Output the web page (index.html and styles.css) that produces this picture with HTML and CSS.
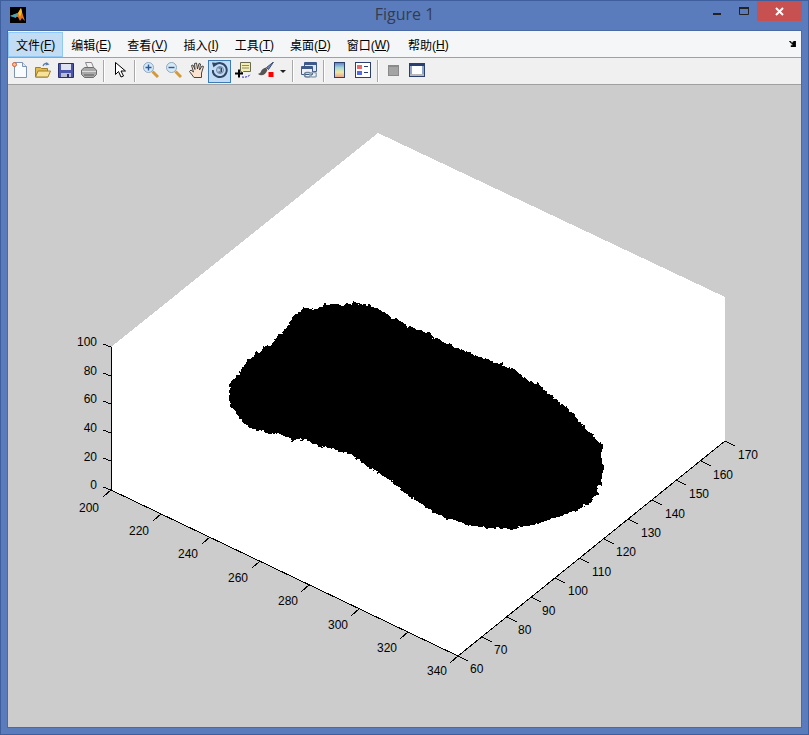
FILE: index.html
```html
<!DOCTYPE html>
<html lang="zh">
<head>
    <meta charset="UTF-8">
    <meta name="viewport" content="width=device-width, initial-scale=1.0">
    <title>Figure 1</title>
    <link rel="stylesheet" href="styles.css">
</head>
<body>
    <div class="window">
        <div class="titlebar">
            <svg class="app-icon" viewBox="0 0 16 16">
                <rect width="16" height="16" fill="#000"/>
                <path d="M0 9l5-2 3-1 3-5 1 4 3 9-3-3-2 3-2-4z" fill="#e8701a"/>
                <path d="M0 9l5-2 3-1-2 5z" fill="#3fa7c4"/>
                <path d="M8 6l3-5 1 4-2 5z" fill="#f6c02c"/>
            </svg>
            <div class="title">Figure 1</div>
            <div class="caption">
                <svg class="cap-btn" viewBox="0 0 27 20"><rect x="11" y="12" width="8" height="2" fill="#222"/></svg>
                <svg class="cap-btn" viewBox="0 0 27 20"><path d="M10.500 6.500h9v7h-9z" fill="none" stroke="#222"/><rect x="10" y="6" width="10" height="2" fill="#222"/></svg>
                <div class="close">
                    <svg viewBox="0 0 9 9" width="9" height="9"><path d="M1 1l7 7M8 1l-7 7" stroke="#fff" stroke-width="2"/></svg>
                </div>
            </div>
        </div>

        <div class="client">
            <div class="menubar">
                <span class="menu active">文件(<u>F</u>)</span>
                <span class="menu">编辑(<u>E</u>)</span>
                <span class="menu">查看(<u>V</u>)</span>
                <span class="menu">插入(<u>I</u>)</span>
                <span class="menu">工具(<u>T</u>)</span>
                <span class="menu">桌面(<u>D</u>)</span>
                <span class="menu">窗口(<u>W</u>)</span>
                <span class="menu last">帮助(<u>H</u>)</span>
                <svg class="menu-more" viewBox="0 0 8 7"><path d="M0 0h2v1h1v1h1v-1h1v-1h3v7h-6v-2h2v-1h-1v-1h-1v-1h-1v-1h-1z" fill="#000"/></svg>
            </div>

            <div class="toolbar">
                <!-- new -->
                <div class="tool"><svg viewBox="0 0 16 16"><path d="M2.500 .5h8l4 4v11h-12z" fill="#f8fbff" stroke="#7f93b2"/><path d="M10.500 .5v4h4" fill="#dfe8f2" stroke="#7f93b2"/><circle cx="2.500" cy="2.500" r="2" fill="#f6c0a0" stroke="#e05a20"/></svg></div>
                <!-- open -->
                <div class="tool"><svg viewBox="0 0 16 16"><path d="M.5 5.500h5l1 1h6v8.500h-12z" fill="#e2bb4e" stroke="#9c7f28"/><path d="M.5 15l2.500-6h12.500l-2.500 6z" fill="#f8e29a" stroke="#9c7f28"/><path d="M8 4c1-2.500 3-3 4.500-2" fill="none" stroke="#5a7fae" stroke-width="1.300"/><path d="M11.500 0l3 2.500-4 1z" fill="#5a7fae"/></svg></div>
                <!-- save -->
                <div class="tool"><svg viewBox="0 0 16 16"><path d="M.5 1.500h15v14h-15z" fill="#4a54a8" stroke="#2a2f70"/><rect x="3" y="2" width="10" height="6" fill="#dfe2f0"/><rect x="3" y="11" width="10" height="4" fill="#b9bdd0"/><rect x="9" y="12" width="2" height="3" fill="#2a2f70"/></svg></div>
                <!-- print -->
                <div class="tool"><svg viewBox="0 0 16 16"><path d="M4.500 .5h6l2.500 6h-6z" fill="#f2f2f2" stroke="#888"/><path d="M.5 8l3-2.500h9l3 2.500v4.500l-3 3h-9l-3-3z" fill="#a9a9a9" stroke="#6c6c6c"/><path d="M1 9.500h14" stroke="#dcdcdc"/><path d="M3 13h10" stroke="#5c5c5c"/></svg></div>
                <div class="sep"></div>
                <!-- pointer -->
                <div class="tool"><svg viewBox="0 0 16 16"><path d="M3.500 .5v12l3-3 2.500 5.500 2.500-1-2.500-5h4.500z" fill="#fff" stroke="#000"/></svg></div>
                <div class="sep"></div>
                <!-- zoom in -->
                <div class="tool"><svg viewBox="0 0 16 16"><path d="M9.500 9.500l5.500 5.500" stroke="#d49a3a" stroke-width="3"/><circle cx="5.500" cy="5.500" r="5" fill="#d5e8f6" stroke="#8ea8c0"/><path d="M2.500 5.500h6M5.500 2.500v6" stroke="#2a5a9a" stroke-width="1.400"/></svg></div>
                <!-- zoom out -->
                <div class="tool"><svg viewBox="0 0 16 16"><path d="M9.500 9.500l5.500 5.500" stroke="#d49a3a" stroke-width="3"/><circle cx="5.500" cy="5.500" r="5" fill="#d5e8f6" stroke="#8ea8c0"/><path d="M2.500 5.500h6" stroke="#2a5a9a" stroke-width="1.400"/></svg></div>
                <!-- pan -->
                <div class="tool"><svg viewBox="0 0 16 16"><path d="M5 15.500L.5 9.500L2 8l2.500 2L2.500 3.500L4 3l2 4.500L5.500 1.500L7.500 1l1 6L10 1.500l1.500 .5l-1 6L13 4l1.500 .5l-2 6.500v4.500z" fill="#fae3d0" stroke="#333" stroke-width=".9"/></svg></div>
                <!-- rotate 3d, pressed -->
                <div class="tool on"><svg viewBox="0 0 16 16"><path d="M2.900 3a7 7 0 1 1-2.200 5" fill="none" stroke="#2f4668" stroke-width="2"/><path d="M0 .5l6 .5-4.500 4.500z" fill="#2f4668"/><circle cx="8" cy="8" r="3.500" fill="#b9cfe6" stroke="#6d87a8"/><path d="M6.500 6h3v4h-3M8 8h1.500" fill="none" stroke="#2f4668"/></svg></div>
                <!-- data cursor -->
                <div class="tool"><svg viewBox="0 0 16 16"><path d="M5.500 .5h10v9h-7l-2 2v-2h-1z" fill="#f4eeb0" stroke="#6a6a50"/><path d="M7 3.500h7M7 6h7" stroke="#8a8a6a"/><path d="M0 11.500h8M4 7.500v8" stroke="#000" stroke-width="2"/><path d="M7 15c3 .5 6 0 8.500-2.500" fill="none" stroke="#2222cc" stroke-dasharray="2 1"/></svg></div>
                <!-- brush -->
                <div class="tool"><svg viewBox="0 0 16 16"><path d="M15.500 0l-7 5.500 2 2z" fill="#6e86b8" stroke="#3d4e78"/><path d="M8 5.500c-3 .5-4.500 2.500-5 4-.5 1.500-2 2-3 2.500 3 2.500 7.500 1.500 9.500-4z" fill="#555"/><rect x="10.500" y="10" width="5" height="5" fill="#f00"/></svg></div>
                <div class="tool-arrow"></div>
                <div class="sep"></div>
                <!-- link plot -->
                <div class="tool"><svg viewBox="0 0 16 16"><path d="M3.500 .5h12v9h-12z" fill="#dde6f2" stroke="#3d5a8a"/><path d="M3 1h13v2H3z" fill="#3d5a8a"/><path d="M.5 4.500h11v8h-11z" fill="#eef2f8" stroke="#3d5a8a"/><path d="M0 5h12v2H0z" fill="#3d5a8a"/><rect x="3.500" y="10.500" width="6.500" height="4.500" rx="2.200" fill="none" stroke="#6d8096" stroke-width="1.600"/><rect x="9" y="10.500" width="6.500" height="4.500" rx="2.200" fill="none" stroke="#93a6ba" stroke-width="1.600"/></svg></div>
                <div class="sep"></div>
                <!-- colorbar -->
                <div class="tool"><svg viewBox="0 0 16 16"><defs><linearGradient id="cbar" x1="0" y1="0" x2="0" y2="1"><stop offset="0" stop-color="#5a7ac8"/><stop offset=".35" stop-color="#a8d8d8"/><stop offset=".65" stop-color="#f0e8a0"/><stop offset="1" stop-color="#e8a090"/></linearGradient></defs><rect x="2.500" y=".5" width="10" height="15" fill="url(#cbar)" stroke="#2a3f70"/></svg></div>
                <!-- legend -->
                <div class="tool"><svg viewBox="0 0 16 16"><rect x=".5" y=".5" width="15" height="15" fill="#fff" stroke="#2a3f70"/><rect x="2" y="3" width="5" height="4" fill="#e86a6a"/><rect x="2" y="9" width="5" height="4" fill="#5a6ae0"/><path d="M9 4.500h4M9 10.500h4" stroke="#2a3f70"/></svg></div>
                <div class="sep"></div>
                <!-- hide plot tools -->
                <div class="tool"><svg viewBox="0 0 16 16"><rect x="2" y="3" width="11" height="11" fill="#8a8a8a"/><rect x="3" y="5" width="9" height="8" fill="#a4a4a4"/></svg></div>
                <!-- show plot tools -->
                <div class="tool"><svg viewBox="0 0 16 16"><rect x=".5" y="1.500" width="15" height="13" fill="#8fa6c8" stroke="#2a3f70"/><rect x="1" y="2" width="14" height="2" fill="#2a3f70"/><rect x="3" y="4" width="10" height="8" fill="#fff"/><rect x="1" y="12" width="14" height="2" fill="#b8b8b8"/></svg></div>
            </div>

            <svg class="plot" viewBox="8 85 793 642">
                <defs>
                    <filter id="rough" x="-5%" y="-5%" width="110%" height="110%" color-interpolation-filters="sRGB">
                        <feTurbulence type="fractalNoise" baseFrequency="0.22" numOctaves="2" seed="4"/>
                        <feDisplacementMap in="SourceGraphic" scale="6" xChannelSelector="R" yChannelSelector="G"/>
                    </filter>
                </defs>
                <polygon class="wall" points="378,133 725,297 725,441 458,656 111,490 111,347"/>

                <path class="blob" filter="url(#rough)" d="M302 307L307 308L317 309L325 305L333 304L343 305L355 303L368 305L377 308L383 311L390 317L400 320L408 327L420 329L440 340L453 346L470 353L487 359L503 365L520 373L523 378L538 384L548 393L557 400L570 410L583 426L595 438L602 444L602 457L603 470L603 478L599 485L598 493L590 502L575 512L563 515L543 522L530 525L510 529L497 528L480 527L463 523L447 519L433 512L420 503L410 497L402 490L385 477L363 464L357 458L348 453L342 453L337 450L320 446L307 440L293 440L280 434L270 434L260 430L252 429L247 426L240 418L232 408L228 400L229 392L231 380L235 378L242 370L248 360L258 352L263 348L273 343L277 337L285 330L291 320L296 316Z"/>

                <path class="axis" d="M111 347V490L458 656L725 441"/>
                <!-- z ticks -->
                <path class="axis" d="M111 347l-8-3M111 376l-8-3M111 404l-8-3M111 433l-8-3M111 461l-8-3M111 490l-8-3"/>
                <!-- x ticks -->
                <path class="axis" d="M111 490l-8 7M161 514l-8 7M210 537l-8 7M260 561l-8 7M309 585l-8 7M359 609l-8 7M408 632l-8 7M458 656l-8 7"/>
                <!-- y ticks -->
                <path class="axis" d="M458 656l10 5M482 637l10 5M507 617l10 5M531 597l10 5M555 578l10 5M579 558l10 5M604 539l10 5M628 519l10 5M652 500l10 5M676 480l10 5M701 461l10 5M725 441l10 5"/>

                <g class="tick-z">
                    <text x="97" y="346">100</text>
                    <text x="97" y="374.500">80</text>
                    <text x="97" y="403">60</text>
                    <text x="97" y="432">40</text>
                    <text x="97" y="460.500">20</text>
                    <text x="97" y="489">0</text>
                </g>
                <g class="tick-x">
                    <text x="89" y="512">200</text>
                    <text x="139" y="535">220</text>
                    <text x="188" y="558">240</text>
                    <text x="238" y="582">260</text>
                    <text x="288" y="605">280</text>
                    <text x="338" y="629">300</text>
                    <text x="387" y="652">320</text>
                    <text x="437" y="675">340</text>
                </g>
                <g class="tick-y">
                    <text x="470" y="673">60</text>
                    <text x="494" y="654">70</text>
                    <text x="518" y="634">80</text>
                    <text x="542" y="615">90</text>
                    <text x="568" y="595">100</text>
                    <text x="592" y="576">110</text>
                    <text x="616" y="556">120</text>
                    <text x="641" y="537">130</text>
                    <text x="665" y="518">140</text>
                    <text x="689" y="498">150</text>
                    <text x="713" y="479">160</text>
                    <text x="738" y="459">170</text>
                </g>
            </svg>
        </div>
    </div>
</body>
</html>
```

FILE: styles.css
```css
* {
    box-sizing: border-box;
}
body {
    margin: 0;
    font-family: "Liberation Sans", "Noto Sans CJK SC", sans-serif;
}
.window {
    width: 809px;
    height: 735px;
    display: flex;
    flex-direction: column;
    padding: 0 7px 7px;
    background-color: #5b7cbc;
    border: 1px solid #3f5f9c;
}
.titlebar {
    height: 30px;
    flex: none;
    display: grid;
    grid-template-columns: 1fr auto 1fr;
    align-items: start;
}
.app-icon {
    width: 16px;
    height: 16px;
    margin: 6px 0 0 2px;
}
.title {
    margin-top: 3px;
    font-family: "Open Sans", sans-serif;
    font-size: 16px;
    line-height: 20px;
    color: #333c50;
}
.caption {
    display: flex;
    justify-content: flex-end;
    margin-right: -1px;
}
.cap-btn {
    width: 27px;
    height: 20px;
}
.close {
    width: 45px;
    height: 20px;
    margin-left: 1px;
    display: flex;
    align-items: center;
    justify-content: center;
    background-color: #c75050;
}
.client {
    flex: 1;
    display: flex;
    flex-direction: column;
    background-color: #cccccc;
    box-shadow: 0 0 0 1px #4a6aa6;
}
.menubar {
    height: 27px;
    flex: none;
    display: flex;
    align-items: stretch;
    padding-top: 1px;
    font-size: 12px;
    color: #000;
    background-color: #f5f6f7;
    border-bottom: 1px solid #a0a0a0;
}
.menu {
    display: flex;
    align-items: center;
    padding: 0 7px;
    white-space: pre;
    border: 1px solid transparent;
}
.menu.last {
    margin-left: 2px;
}
.menu u {
    text-decoration: underline;
}
.menu.active {
    background-color: #c1dcf3;
    border-color: #90c8f6;
}
.menu-more {
    width: 7px;
    height: 6px;
    margin: 9px 5px 0 auto;
}
.toolbar {
    height: 27px;
    flex: none;
    display: flex;
    align-items: center;
    background-color: #f0f0f0;
    border-bottom: 1px solid #a0a0a0;
}
.tool {
    width: 23px;
    height: 23px;
    display: flex;
    align-items: center;
    justify-content: center;
    padding-bottom: 2px;
    border: 1px solid transparent;
}
.tool svg {
    width: 16px;
    height: 16px;
}
.tool.on {
    background-color: #c1dcf3;
    border-color: #3d7ab8;
}
.tool-arrow {
    width: 12px;
    height: 23px;
    position: relative;
}
.tool-arrow::after {
    content: "";
    position: absolute;
    left: 3px;
    top: 10px;
    border: 3px solid transparent;
    border-top: 3px solid #222;
    border-bottom: 0;
}
.sep {
    width: 2px;
    height: 22px;
    margin: 0 3px;
    background-color: #a8a8a8;
    border-right: 1px solid #fff;
}
.plot {
    flex: 1;
    display: block;
    width: 100%;
    min-height: 0;
}
.wall {
    fill: #fff;
    shape-rendering: crispEdges;
}
.blob {
    fill: #000;
    shape-rendering: crispEdges;
}
.axis {
    fill: none;
    stroke: #000;
    stroke-width: 1;
    shape-rendering: crispEdges;
}
.plot text {
    font-family: "Liberation Sans", sans-serif;
    font-size: 12px;
    fill: #000;
}
.tick-z text {
    text-anchor: end;
}
.tick-x text {
    text-anchor: middle;
}
```
